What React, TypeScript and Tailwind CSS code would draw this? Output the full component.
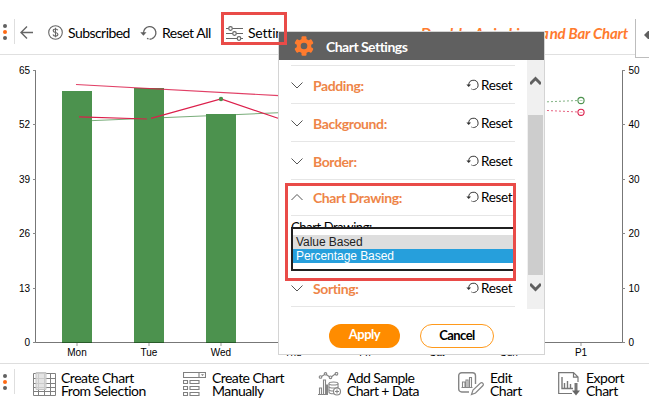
import { useState, type ReactNode } from 'react';

const DAYS = ['Mon', 'Tue', 'Wed', 'Thu', 'Fri', 'Sat', 'Sun', 'P1'];
const LEFT_TICKS = [65, 52, 39, 26, 13, 0];
const RIGHT_TICKS = [50, 40, 30, 20, 10, 0];
const BARS = [
  { x: 62, y: 91 },
  { x: 134, y: 88 },
  { x: 206, y: 114 },
];

function Dots() {
  return (
    <div className="flex w-[5px] flex-col items-center gap-[2px]">
      <span className="size-1 rounded-full bg-[#606060]" />
      <span className="size-1 rounded-full bg-[#ff6a13]" />
      <span className="size-1 rounded-full bg-[#606060]" />
    </div>
  );
}

function ResetIcon({ className }: { className: string }) {
  return (
    <svg viewBox="0 0 17 16" className={className} fill="none" stroke="currentColor" strokeWidth="1.3">
      <path d="M3.5 9.2V8a6.2 6.2 0 1 1 8 5.8" />
      <path d="M11.5 13.8c-1.5.6-3.2.4-4.4-.5" strokeDasharray="2 1" />
      <path d="M.3 7.2h6.2L3.4 10.8z" fill="currentColor" stroke="none" />
    </svg>
  );
}

function Toolbar() {
  return (
    <header className="flex h-[55px] pt-[19px] text-[14px] leading-[28px] text-black">
      <div className="flex h-9 flex-1 items-start border-b border-[#e0e0e0]">
        <div className="flex h-[25px] w-[15px] items-center border-r border-[#dedede] pl-[2px]">
          <Dots />
        </div>
        <svg className="mt-[6px] ml-[5px] h-[15px] w-[14px]" fill="none" stroke="#666" strokeWidth="1.4">
          <path d="M13 7.5H1M7 1.5l-6 6 6 6" />
        </svg>
        <svg className="mt-[6px] ml-[14px] size-[15px]" viewBox="0 0 15 15" fill="none" stroke="#666" strokeWidth="1.1">
          <circle cx="7.5" cy="7.5" r="6.8" />
          <path d="M9.8 5.2C9.4 4.3 8.6 4 7.5 4 6.2 4 5.2 4.6 5.2 5.7c0 2.5 4.7 1.2 4.7 3.6 0 1.1-1 1.8-2.4 1.8S5.3 10.5 5 9.5M7.5 2.7v9.6" />
        </svg>
        <span className="ml-[5px] w-[72px] tracking-[-0.55px] whitespace-nowrap">Subscribed</span>
        <ResetIcon className="mt-[6px] h-4 w-[17px] text-[#606060]" />
        <span className="ml-[5px] w-[64px] tracking-[-0.5px] whitespace-nowrap">Reset All</span>
        <svg className="mt-[6px] h-4 w-[17px]" viewBox="0 0 17 16" fill="none" stroke="#666" strokeWidth="1.2">
          <path d="M0 3.5h2.5M6.5 3.5H17M0 8.5h6.5M10.5 8.5H17M0 13.5h11M15 13.5h2" />
          <circle cx="4.5" cy="3.5" r="1.8" />
          <circle cx="8.5" cy="8.5" r="1.8" />
          <circle cx="13" cy="13.5" r="1.8" />
        </svg>
        <span className="ml-[5px] tracking-[-0.2px]">Settings</span>
        <h1 className="ml-auto pr-[7px] text-[15px] font-bold tracking-[-0.2px] whitespace-nowrap text-[#ff7b2e] italic">
          <span className="tracking-[0.72px]">Double Axis Line a</span>nd Bar Chart
        </h1>
      </div>
      <button className="flex h-[39px] w-[14px] items-center justify-end border-b border-l border-[#bdbdbd] pb-[7px]" aria-label="Collapse">
        <svg className="h-[8px] w-[6px]" viewBox="0 0 6 8">
          <path d="M1 4l4-4h1v8H5z" fill="#606060" />
        </svg>
      </button>
    </header>
  );
}

function Chart() {
  return (
    <svg viewBox="0 55 649 308" className="block h-[308px] w-[649px] font-['Liberation_Sans',sans-serif] text-[10px]" fill="none">
      {/* Trend line of the second series */}
      <path d="M77 121.3L581 100" stroke="#4c924e" strokeOpacity="0.75" strokeWidth="1.1" />
      <g fill="#4c924e">
        {BARS.map((bar) => (
          <rect key={bar.x} x={bar.x} y={bar.y} width="30" height={342 - bar.y} />
        ))}
      </g>
      <path d="M76 84.5L279 95.6" stroke="#dc1f4b" strokeOpacity="0.85" strokeWidth="1.2" />
      <path d="M79 116.8L147 119M151 118.3L221 99l57 19.3" stroke="#dc1f4b" strokeWidth="1.2" />
      <circle cx="221" cy="99" r="2.2" fill="#4c924e" />

      {/* Predicted values */}
      <path d="M544 90h40v40h-40z" fill="white" />
      <path d="M543 102l35-1.500" stroke="#4c924e" strokeOpacity="0.7" strokeDasharray="2 2" />
      <path d="M543 110.3l35 1.700" stroke="#dc1f4b" strokeOpacity="0.7" strokeDasharray="2 2" />
      <circle cx="581" cy="100.5" r="3.100" fill="white" stroke="#4c924e" strokeWidth="1.100" />
      <path d="M579.5 100.5h3" stroke="#4c924e" strokeOpacity="0.4" />
      <circle cx="581" cy="112.3" r="3.100" fill="white" stroke="#dc1f4b" strokeWidth="1.100" />
      <path d="M579.5 112.5h3" stroke="#dc1f4b" strokeOpacity="0.4" />

      {/* Axes */}
      <path d="M35.5 70v272.5M622.5 70v272.5M33 342.5h592" stroke="#777" />
      {BARS.map((bar) => (
        <path key={bar.x} d={`M${bar.x} 342.5h30`} stroke="#285a29" />
      ))}
      {LEFT_TICKS.map((value, i) => (
        <g key={value}>
          <path d={`M33 ${Math.floor(70 + i * 54.5)}.5h3`} stroke="#888" />
          <text x="30" y={73.5 + i * 54.5} textAnchor="end" fill="black">{value}</text>
        </g>
      ))}
      {RIGHT_TICKS.map((value, i) => (
        <g key={value}>
          <path d={`M622 ${Math.floor(70 + i * 54.5)}.5h3`} stroke="#888" />
          <text x="628.5" y={73.5 + i * 54.5} fill="black">{value}</text>
        </g>
      ))}
      {DAYS.map((day, i) => (
        <g key={day}>
          <path d={`M${77 + i * 72} 343v3`} stroke="#999" />
          <text x={77 + i * 72} y="356" textAnchor="middle" fill="black">{day}</text>
        </g>
      ))}
    </svg>
  );
}

function Chevron({ up = false }: { up?: boolean }) {
  return (
    <svg className="h-[8px] w-3" viewBox="0 0 12 8" fill="none" stroke="#555" strokeWidth="1">
      <path d={up ? 'M.5 7L6 1.5 11.5 7' : 'M.5 1.5L6 7l5.5-5.5'} />
    </svg>
  );
}

function Section({ title, open = false }: { title: string; open?: boolean }) {
  return (
    <div className="flex h-[38px] shrink-0 items-center border-b border-[#e6e6e6] pt-px">
      <button className="flex items-center" aria-expanded={open}>
        <Chevron up={open} />
        <span className="ml-[10px] text-[14px] font-bold tracking-[-0.4px] whitespace-nowrap text-[#ee8548]">{title}</span>
      </button>
      <ResetIcon className="ml-auto h-3 w-[13px] text-[#333]" />
      <span className="ml-[2px] w-[34px] text-[13.5px] tracking-[-0.3px] text-black">Reset</span>
    </div>
  );
}

function SettingsDialog() {
  const [selected, setSelected] = useState('Percentage Based');

  return (
    <div className="absolute top-[31px] left-[278px] flex h-[324px] w-[267px] flex-col border border-[#d4d4d4] bg-white" role="dialog">
      <div className="flex h-7 shrink-0 items-center bg-[#606060] pl-[15px]">
        <svg className="size-5" viewBox="0 0 20 20">
          <g fill="#ff7b2e">
            <circle cx="10" cy="10" r="7.3" />
            <rect x="7.5" y=".3" width="5" height="19.4" rx="1.2" />
            <rect x="7.5" y=".3" width="5" height="19.4" rx="1.2" transform="rotate(60 10 10)" />
            <rect x="7.5" y=".3" width="5" height="19.4" rx="1.2" transform="rotate(120 10 10)" />
          </g>
          <circle cx="10" cy="10" r="3.3" fill="#606060" />
        </svg>
        <h2 className="ml-[12px] text-[14px] font-bold tracking-[-0.52px] text-white">Chart Settings</h2>
      </div>

      <div className="flex h-[249px] shrink-0">
        <div className="ml-3 flex w-[224px] flex-col pt-[5px]">
          <div className="h-px shrink-0 bg-[#e6e6e6]" />
          <Section title="Padding:" />
          <Section title="Background:" />
          <Section title="Border:" />
          <div className="-mt-[2px] shrink-0">
            <Section title="Chart Drawing:" open />
          </div>
          <div className="flex h-[11px] shrink-0 items-start overflow-hidden pt-[3px] text-[13px] leading-[16px] tracking-[-0.4px] text-black">
            Chart Drawing:
          </div>
          <div className="flex h-11 shrink-0 flex-col border-2 border-[#202020] bg-white pt-[6px] font-['Liberation_Sans',sans-serif] text-[12px] leading-[14px]">
            {['Value Based', 'Percentage Based'].map((option) => (
              <button
                key={option}
                onClick={() => setSelected(option)}
                className={`h-[14px] pl-[3px] text-left tracking-[-0.05px] ${option === selected ? 'bg-[#269fdc] text-white' : 'bg-[#dedede] text-[#222]'}`}
              >
                {option}
              </button>
            ))}
          </div>
          <div className="-mt-[2px] shrink-0">
            <Section title="Sorting:" />
          </div>
        </div>
        <div className="ml-3 flex w-[17px] flex-col items-center bg-[#f0f0f0]">
          <svg className="mt-[15px] h-[12px] w-[11px]" viewBox="0 0 11 12" fill="none" stroke="#606060" strokeWidth="3">
            <path d="M0 9l5.5-5.5L11 9" />
          </svg>
          <div className="mt-7 h-40 w-[15px] bg-[#cdcdcd]" />
          <svg className="mt-[6px] h-[12px] w-[11px]" viewBox="0 0 11 12" fill="none" stroke="#606060" strokeWidth="3">
            <path d="M0 3l5.5 5.5L11 3" />
          </svg>
        </div>
      </div>

      <div className="flex gap-5 pt-[15px] pl-[50px] text-[13px] font-bold tracking-[-0.6px]">
        <button className="h-6 w-[71px] rounded-full bg-[#ff8c00] pb-[3px] tracking-[-0.5px] text-white">Apply</button>
        <button className="h-6 w-[74px] rounded-full border border-[#ff9a1c] text-black">Cancel</button>
      </div>
    </div>
  );
}

function TableIcon() {
  return (
    <svg className="h-6 w-[23px]" viewBox="0 0 23 24" fill="none" stroke="#808080">
      <path d="M.5 1.5h22v22H.5zM.5 6.500h22M.5 11.500h22M.5 15.500h22M.5 19.500h22M5.500 2v21M11.500 2v21M17.500 2v21" />
      <path d="M3 .5h10v17H3z" fill="#ddd" fillOpacity=".8" stroke="#c5c5c5" />
    </svg>
  );
}

function FormIcon() {
  return (
    <svg className="h-6 w-[23px]" viewBox="0 0 23 24" fill="none" stroke="#808080" strokeWidth="1.1">
      <path d="M.5.5h22v5H.5zM16 .5v5M.5 8.500h4v3h-4zM7 8.500h9v3H7zM.5 14.500h4v3h-4zM7 14.500h9v3H7zM.5 20.500h4v3h-4zM7 20.500h9v3H7z" />
      <path d="M18 2.3h3L19.5 4z" fill="#777" stroke="none" />
    </svg>
  );
}

function SampleIcon() {
  return (
    <svg className="h-6 w-[23px]" viewBox="0 0 23 24" fill="none" stroke="#858585" strokeWidth="1.1">
      <path d="M3.5 4.5L7.5 2l5 3.5 5.5-4M0 22.500h10M1.500 22v-6h2v6M5.500 22V8h2v14M8.500 22V13h1v9" />
      <g fill="white">
        <circle cx="2.5" cy="5" r="1.3" />
        <circle cx="7.5" cy="1.8" r="1.2" />
        <circle cx="12.5" cy="5.3" r="1.3" />
        <circle cx="18.5" cy="1.8" r="1.3" />
        <path d="M11 11.5v8.500c0 2.400 9 2.400 9 0v-8.500" />
        <ellipse cx="15.5" cy="11.5" rx="4.5" ry="1.5" />
        <path d="M11 14.5c0 2 9 2 9 0M11 17.5c0 2 9 2 9 0" />
        <circle cx="19" cy="19.5" r="3.5" />
      </g>
      <path d="M17 19.5h4M19 17.5v4" />
    </svg>
  );
}

function EditIcon() {
  return (
    <svg className="h-6 w-[26px]" viewBox="0 0 26 24" fill="none" stroke="#858585" strokeWidth="1.4">
      <path d="M11 20H3.7a3 3 0 0 1-3-3V3.700a3 3 0 0 1 3-3h10.800a3 3 0 0 1 3 3V12" />
      <path d="M3.5 15.5h11M4.500 15v-5h2.500v5M8 15V8h2v7M11.500 15V5.500h2V15" strokeWidth="1.1" />
      <path d="M13.5 22.5l1.500-4.500 7.500-7c2-1 3.500 1 2.500 2.500l-7.500 7.500z" fill="white" strokeWidth="1.2" />
    </svg>
  );
}

function ExportIcon() {
  return (
    <svg className="h-6 w-[23px]" viewBox="0 0 23 24" fill="none" stroke="#777" strokeWidth="1.2">
      <path d="M14 21.5H.7V.6h14.800l4.500 4.500V10M15.500.6v4.500H20" />
      <path d="M4 5v11.500h11M6.500 16V11M9.500 16V9M12.500 16V12" strokeWidth="1.4" />
      <path d="M18 11v8" strokeWidth="3" />
      <path d="M14 18.5h8L18 23.500z" fill="#666" stroke="none" />
    </svg>
  );
}

function Action({ icon, first, second, className }: { icon: ReactNode; first: string; second: string; className: string }) {
  return (
    <button className={`flex shrink-0 gap-[5px] text-left text-[14px] leading-[13px] whitespace-nowrap text-black ${className}`}>
      {icon}
      <span className="-mt-px">{first}<br />{second}</span>
    </button>
  );
}

function Footer() {
  return (
    <footer className="flex h-[47px] border-t border-[#dedede] pt-[5px]">
      <div className="flex h-[25px] w-[15px] items-center border-r border-[#dedede] pl-[2px]">
        <Dots />
      </div>
      <div className="flex pt-[3px] pl-[18px]">
        <Action icon={<TableIcon />} first="Create Chart" second="From Selection" className="w-[150px] tracking-[-0.48px]" />
        <Action icon={<FormIcon />} first="Create Chart" second="Manually" className="w-[135px] gap-[6px] tracking-[-0.55px]" />
        <Action icon={<SampleIcon />} first="Add Sample" second="Chart + Data" className="w-[140px] gap-[6px] tracking-[-0.58px]" />
        <Action icon={<EditIcon />} first="Edit" second="Chart" className="w-[100px] gap-[6px] tracking-[-0.5px]" />
        <Action icon={<ExportIcon />} first="Export" second="Chart" className="tracking-[-0.5px]" />
      </div>
    </footer>
  );
}

export default function App() {
  return (
    <div className="relative h-[410px] w-[649px] overflow-hidden bg-white font-[Lato,sans-serif]">
      <Toolbar />
      <Chart />
      <Footer />
      <SettingsDialog />

      {/* Callouts over the settings button and the drawing mode */}
      <div className="pointer-events-none absolute top-[12px] left-[221px] h-[33px] w-[66px] border-3 border-[#e94b48]" />
      <div className="pointer-events-none absolute top-[183px] left-[285px] h-[98px] w-[231px] border-3 border-[#e94b48]" />
    </div>
  );
}
